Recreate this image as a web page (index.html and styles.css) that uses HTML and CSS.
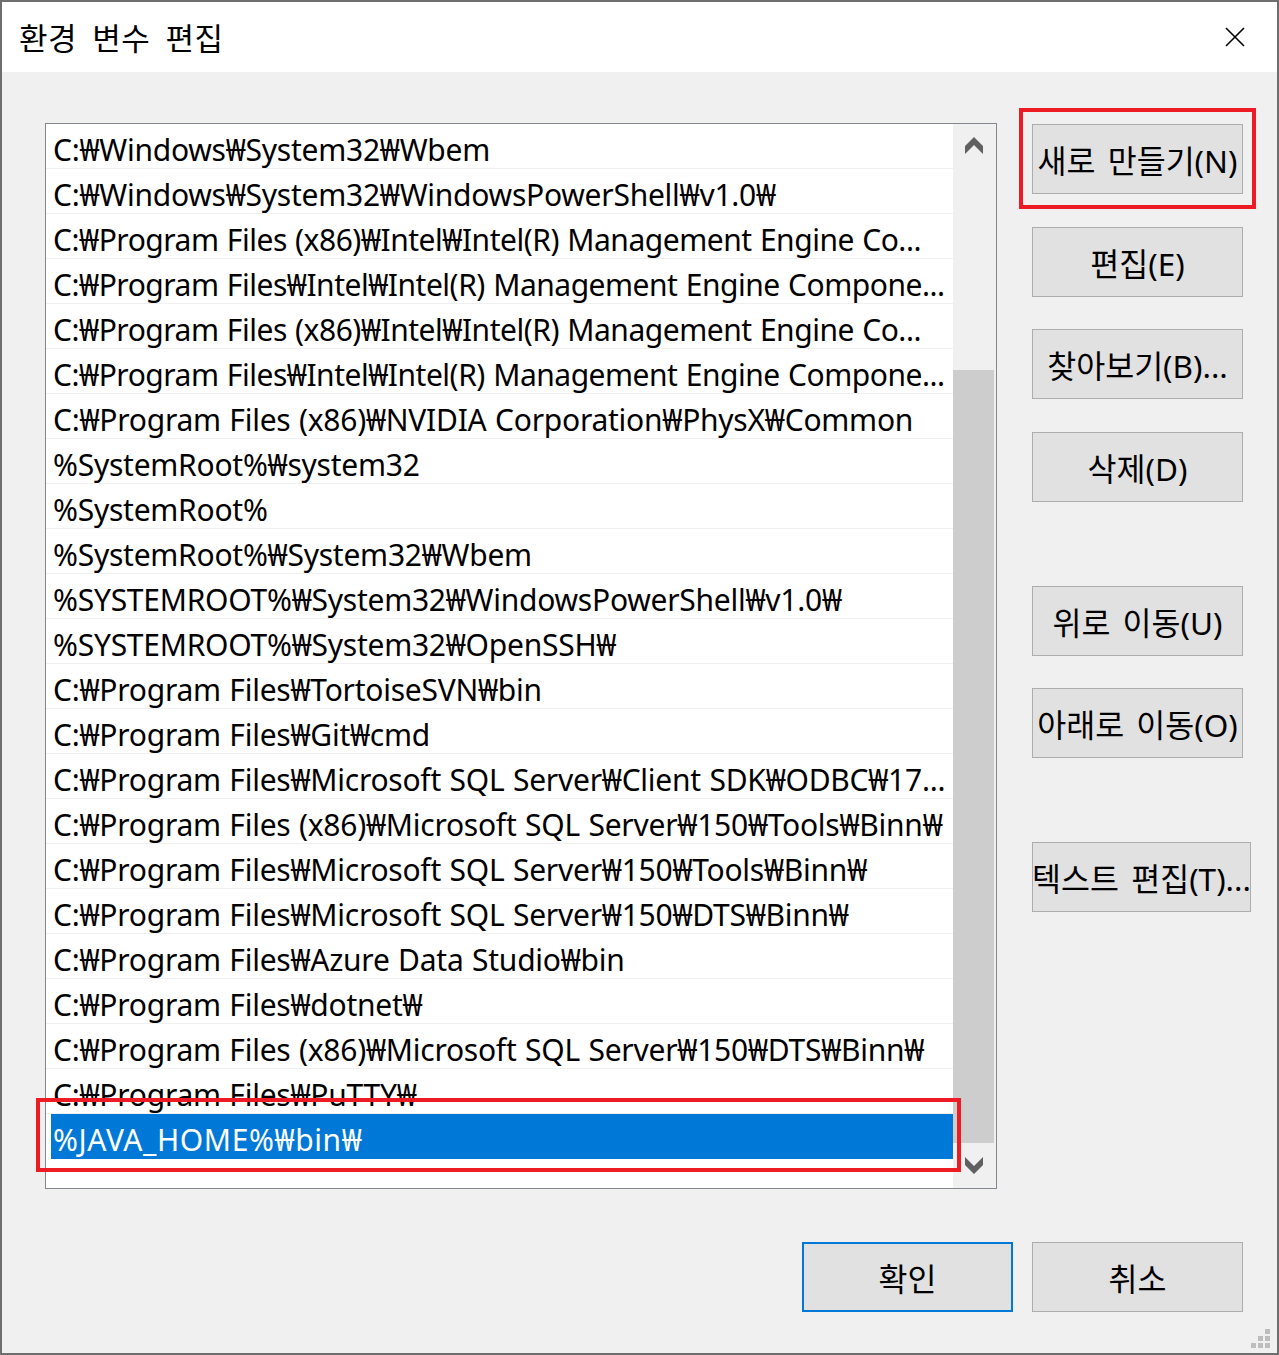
FILE: index.html
```html
<!DOCTYPE html>
<html lang="ko">
<head>
<meta charset="utf-8">
<title>환경 변수 편집</title>
<link rel="stylesheet" href="styles.css">
</head>
<body>
<div class="window">
  <div class="titlebar">
    <div class="title">환경 변수 편집</div>
    <svg class="close" width="20" height="20" viewBox="0 0 20 20"><path d="M1 1 L19 19 M19 1 L1 19" stroke="#000" stroke-width="1.6" fill="none"/></svg>
  </div>
  <div class="body">
    <div class="main">
      <div class="list">
        <div class="rows">
          <div class="row">C:₩Windows₩System32₩Wbem</div>
          <div class="row">C:₩Windows₩System32₩WindowsPowerShell₩v1.0₩</div>
          <div class="row trim">C:₩Program Files (x86)₩Intel₩Intel(R) Management Engine Co...</div>
          <div class="row trim">C:₩Program Files₩Intel₩Intel(R) Management Engine Compone...</div>
          <div class="row trim">C:₩Program Files (x86)₩Intel₩Intel(R) Management Engine Co...</div>
          <div class="row trim">C:₩Program Files₩Intel₩Intel(R) Management Engine Compone...</div>
          <div class="row">C:₩Program Files (x86)₩NVIDIA Corporation₩PhysX₩Common</div>
          <div class="row">%SystemRoot%₩system32</div>
          <div class="row">%SystemRoot%</div>
          <div class="row">%SystemRoot%₩System32₩Wbem</div>
          <div class="row">%SYSTEMROOT%₩System32₩WindowsPowerShell₩v1.0₩</div>
          <div class="row">%SYSTEMROOT%₩System32₩OpenSSH₩</div>
          <div class="row">C:₩Program Files₩TortoiseSVN₩bin</div>
          <div class="row">C:₩Program Files₩Git₩cmd</div>
          <div class="row">C:₩Program Files₩Microsoft SQL Server₩Client SDK₩ODBC₩17...</div>
          <div class="row">C:₩Program Files (x86)₩Microsoft SQL Server₩150₩Tools₩Binn₩</div>
          <div class="row">C:₩Program Files₩Microsoft SQL Server₩150₩Tools₩Binn₩</div>
          <div class="row">C:₩Program Files₩Microsoft SQL Server₩150₩DTS₩Binn₩</div>
          <div class="row">C:₩Program Files₩Azure Data Studio₩bin</div>
          <div class="row">C:₩Program Files₩dotnet₩</div>
          <div class="row">C:₩Program Files (x86)₩Microsoft SQL Server₩150₩DTS₩Binn₩</div>
          <div class="row">C:₩Program Files₩PuTTY₩</div>
          <div class="row selected"><span class="sel">%JAVA_HOME%₩bin₩</span></div>
        </div>
        <div class="scrollbar">
          <div class="sb-btn">
            <svg width="18" height="17" viewBox="0 0 18 17"><polygon points="9,0 18,9 18,17 9,8 0,17 0,9" fill="#606060"/></svg>
          </div>
          <div class="sb-track">
            <div class="sb-thumb" style="margin-top:203px;height:773px"></div>
          </div>
          <div class="sb-btn sb-down">
            <svg width="18" height="17" viewBox="0 0 18 17"><polygon points="9,17 18,8 18,0 9,9 0,0 0,8" fill="#606060"/></svg>
          </div>
        </div>
      </div>
      <div class="buttons">
        <div class="btn b-new">새로 만들기(N)</div>
        <div class="btn b-edit">편집(E)</div>
        <div class="btn b-browse">찾아보기(B)...</div>
        <div class="btn b-del">삭제(D)</div>
        <div class="btn b-up">위로 이동(U)</div>
        <div class="btn b-down">아래로 이동(O)</div>
        <div class="btn b-text">텍스트 편집(T)...</div>
      </div>
    </div>
    <div class="footer">
      <div class="btn ok">확인</div>
      <div class="btn">취소</div>
    </div>
  </div>
  <div class="grip">
    <span></span><span></span><span></span><span></span><span></span><span></span><span></span><span></span><span></span>
  </div>
  <div class="mark mark-new"></div>
  <div class="mark mark-sel"></div>
</div>
</body>
</html>
```

FILE: styles.css
```css
* { box-sizing: border-box; }
html, body { margin: 0; padding: 0; }
body {
  width: 1279px;
  height: 1355px;
  background: #f0f0f0;
  font-family: "Noto Sans", "Noto Sans CJK KR", sans-serif;
  color: #000;
  overflow: hidden;
}
.window {
  position: relative;
  width: 1279px;
  height: 1355px;
  border: 2px solid #6e6e6e;
  background: #f0f0f0;
  display: flex;
  flex-direction: column;
}
.titlebar {
  height: 70px;
  background: #fff;
  display: flex;
  align-items: center;
  justify-content: space-between;
  padding: 0 32px 0 17px;
  flex-shrink: 0;
}
.title {
  font-family: "Noto Sans CJK KR", sans-serif;
  font-size: 31px;
  letter-spacing: 0.5px;
  word-spacing: 6px;
  margin-top: -2px;
}
.close { display: block; }
.body {
  flex: 1;
  display: flex;
  flex-direction: column;
  padding: 51px 34px 0 43px;
}
.main {
  display: flex;
  gap: 35px;
}
.list {
  width: 952px;
  height: 1066px;
  border: 1px solid #828790;
  background: #fff;
  display: flex;
}
.rows {
  width: 907px;
  flex-shrink: 0;
  overflow: hidden;
}
.row {
  height: 45px;
  border-bottom: 1px solid #f0f0f0;
  padding: 7px 0 0 7px;
  line-height: 38px;
  font-size: 30px;
  letter-spacing: -0.25px;
  word-spacing: 1px;
  white-space: nowrap;
  overflow: hidden;
}
.row.trim {
  letter-spacing: -0.48px;
}
.row.selected {
  border-bottom: none;
  padding: 0 0 0 5px;
}
.sel {
  display: block;
  height: 45px;
  background: #0078d7;
  color: #fff;
  padding: 7px 0 0 2px;
  line-height: 38px;
  letter-spacing: 0.6px;
}
.scrollbar {
  width: 43px;
  background: #f0f0f0;
  display: flex;
  flex-direction: column;
}
.sb-btn {
  height: 43px;
  display: flex;
  align-items: center;
  justify-content: center;
  padding-right: 2px;
}
.sb-btn svg { display: block; }
.sb-down { height: 45px; }
.sb-track {
  flex: 1;
  display: flex;
  flex-direction: column;
}
.sb-thumb {
  width: 41px;
  background: #cdcdcd;
}
.buttons {
  display: flex;
  flex-direction: column;
  align-items: flex-start;
  padding-top: 1px;
}
.btn {
  width: 211px;
  height: 70px;
  background: #e1e1e1;
  border: 1px solid #adadad;
  display: flex;
  align-items: center;
  justify-content: center;
  font-size: 31.5px;
  word-spacing: 4px;
  white-space: nowrap;
  flex-shrink: 0;
}
.b-edit, .b-browse, .b-del, .b-down { margin-top: 33px; }
.b-browse { margin-top: 32px; }
.b-down { margin-top: 32px; }
.b-up, .b-text { margin-top: 84px; }
.b-text { width: 219px; }
.footer {
  display: flex;
  justify-content: flex-end;
  gap: 19px;
  margin-top: 53px;
}
.btn.ok {
  border: 2px solid #0078d7;
}
.grip {
  position: absolute;
  right: 7px;
  bottom: 5px;
  width: 19px;
  height: 19px;
  display: grid;
  grid-template-columns: repeat(3, 5px);
  grid-template-rows: repeat(3, 5px);
  gap: 2px;
}
.grip span { background: #bdbdbd; }
.grip span:nth-child(1), .grip span:nth-child(2), .grip span:nth-child(4) { background: transparent; }
.mark {
  position: absolute;
  border: 4px solid #ed1c24;
  pointer-events: none;
}
.mark-new {
  left: 1017px;
  top: 106px;
  width: 237px;
  height: 101px;
}
.mark-sel {
  left: 34px;
  top: 1096px;
  width: 925px;
  height: 74px;
}
```
